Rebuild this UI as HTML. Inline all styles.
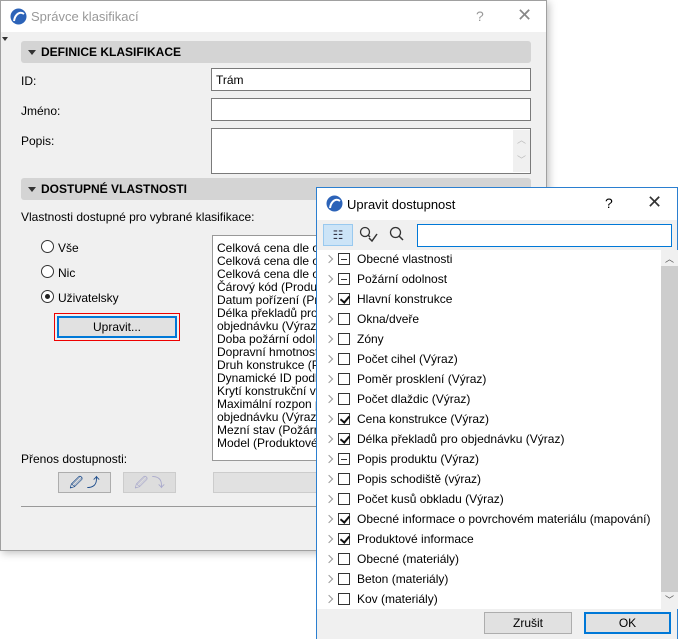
<!DOCTYPE html>
<html><head><meta charset="utf-8"><style>
*{box-sizing:border-box;margin:0;padding:0}
body{width:678px;height:639px;background:#fff;position:relative;overflow:hidden;font-family:"Liberation Sans",sans-serif;font-size:12px;color:#000}
.a{position:absolute}
.main{left:0;top:0;width:547px;height:551px;background:#f0f0f0;border:1px solid #a0a0a0;box-shadow:2px 2px 8px rgba(0,0,0,.25)}
.tb{left:0;top:0;width:545px;height:31px;background:#fff}
.hdr{background:#d4d4d4;border-radius:3px;height:22px;font-weight:bold;font-size:12px;padding:4px 0 0 20px}
.hdr:before{content:"";position:absolute;left:7px;top:9px;border-left:4px solid transparent;border-right:4px solid transparent;border-top:5px solid #333}
.inp{background:#fff;border:1px solid #7a7a7a}
.rad{width:13px;height:13px;border:1px solid #333;border-radius:50%;background:#fff}
.lst div{height:13px;line-height:13px;white-space:nowrap}
.btn{background:#e1e1e1;border:1px solid #adadad}
.dlg{left:316px;top:187px;width:362px;height:452px;background:#fff;border:1px solid #2b7fd0}
.row{position:absolute;left:0;height:20px;line-height:20px;white-space:nowrap}
.chev{position:absolute;left:9px;top:7px;width:6px;height:6px;border-right:1.5px solid #999;border-top:1.5px solid #999;transform:rotate(45deg)}
.cb{position:absolute;left:21px;top:4px;width:12px;height:12px;border:1px solid #333;background:#fff}
.cb.m:after{content:"";position:absolute;left:2px;top:4.5px;width:6px;height:1px;background:#333}
.cb.c:after{content:"";position:absolute;left:3px;top:0px;width:4px;height:7px;border-right:2px solid #111;border-bottom:2px solid #111;transform:rotate(40deg)}
.row span{position:absolute;left:40px}
</style></head><body>
<div class="a main">
 <div class="a tb"></div>
 <svg class="a" style="left:9px;top:7px" width="17" height="17" viewBox="0 0 17 17"><circle cx="8.5" cy="8.5" r="8" fill="#2c63b8"/><path d="M4 13 C5 6 10 3 14 6" stroke="#fff" stroke-width="2" fill="none"/></svg>
 <div class="a" style="left:30px;top:8px;color:#999;font-size:13px">Správce klasifikací</div>
 <div class="a" style="left:475px;top:7px;color:#999;font-size:14px">?</div>
 <div class="a" style="left:516px;top:4px;color:#888;font-size:18px">✕</div>
 <div class="a" style="left:1px;top:36px;border-left:3px solid transparent;border-right:3px solid transparent;border-top:4px solid #333"></div>
 <div class="a hdr" style="left:20px;top:40px;width:510px">DEFINICE KLASIFIKACE</div>
 <div class="a" style="left:20px;top:73px">ID:</div>
 <div class="a inp" style="left:210px;top:67px;width:320px;height:23px;padding:4px 4px">Trám</div>
 <div class="a" style="left:20px;top:103px">Jméno:</div>
 <div class="a inp" style="left:210px;top:97px;width:320px;height:23px"></div>
 <div class="a" style="left:20px;top:133px">Popis:</div>
 <div class="a inp" style="left:210px;top:127px;width:320px;height:46px"><div class="a" style="right:0;top:1px;width:17px;height:42px;background:#f0f0f0;color:#bbb;font-size:9px;text-align:center;line-height:20px">︿<br>﹀</div></div>
 <div class="a hdr" style="left:20px;top:177px;width:510px">DOSTUPNÉ VLASTNOSTI</div>
 <div class="a" style="left:20px;top:209px">Vlastnosti dostupné pro vybrané klasifikace:</div>
 <div class="a rad" style="left:40px;top:239px"></div><div class="a" style="left:57px;top:240px">Vše</div>
 <div class="a rad" style="left:40px;top:264px"></div><div class="a" style="left:57px;top:265px">Nic</div>
 <div class="a rad" style="left:40px;top:289px"><div class="a" style="left:3px;top:3px;width:5px;height:5px;border-radius:50%;background:#222"></div></div><div class="a" style="left:57px;top:290px">Uživatelsky</div>
 <div class="a" style="left:53px;top:312px;width:126px;height:28px;border:1px solid #e00"><div class="a btn" style="left:2px;top:2px;width:120px;height:22px;border:2px solid #0078d7;text-align:center;line-height:18px">Upravit...</div></div>
 <div class="a inp lst" style="left:211px;top:234px;width:120px;height:226px;padding:6px 0 0 4px;border-color:#999">
  <div>Celková cena dle objednávky</div><div>Celková cena dle objednávky</div><div>Celková cena dle objednávky</div><div>Čárový kód (Produktové</div><div>Datum pořízení (Produktové</div><div>Délka překladů pro</div><div>objednávku (Výraz)</div><div>Doba požární odolnosti</div><div>Dopravní hmotnost</div><div>Druh konstrukce (Po</div><div>Dynamické ID podle</div><div>Krytí konstrukční výztuže</div><div>Maximální rozpon pro</div><div>objednávku (Výraz))</div><div>Mezní stav (Požární</div><div>Model (Produktové</div>
 </div>
 <div class="a" style="left:20px;top:451px">Přenos dostupnosti:</div>
 <div class="a btn" style="left:57px;top:471px;width:53px;height:21px;color:#1a4a8a;font-size:13px;text-align:center;line-height:19px">🖉 ⤴</div>
 <div class="a btn" style="left:122px;top:471px;width:53px;height:21px;color:#aac;background:#ddd;border-color:#ccc;font-size:13px;text-align:center;line-height:19px">🖉 ⤵</div>
 <div class="a btn" style="left:212px;top:471px;width:110px;height:21px;border-color:#ccc"></div>
 <div class="a" style="left:20px;top:505px;width:300px;height:1px;background:#999"></div>
</div>

<div class="a dlg">
 <svg class="a" style="left:9px;top:7px" width="17" height="17" viewBox="0 0 17 17"><circle cx="8.5" cy="8.5" r="8" fill="#2c63b8"/><path d="M4 13 C5 6 10 3 14 6" stroke="#fff" stroke-width="2" fill="none"/></svg>
 <div class="a" style="left:30px;top:9px;font-size:13px">Upravit dostupnost</div>
 <div class="a" style="left:288px;top:7px;font-size:14px">?</div>
 <div class="a" style="left:330px;top:4px;font-size:18px;color:#333">✕</div>
 <div class="a" style="left:0;top:32px;width:360px;height:30px;background:#f0f0f0"></div>
 <div class="a" style="left:6px;top:36px;width:30px;height:22px;background:#cce4f7;border:1px solid #99c9ef;font-size:12px;text-align:center;line-height:20px;color:#334">☷</div>
 <svg class="a" style="left:42px;top:38px" width="20" height="18"><circle cx="6" cy="6" r="4.5" stroke="#333" fill="none" stroke-width="1.3"/><path d="M9 9 L11 11 M10 12 L13 15 L18 8" stroke="#333" stroke-width="1.5" fill="none"/></svg>
 <svg class="a" style="left:72px;top:38px" width="16" height="16"><circle cx="6.5" cy="6.5" r="5" stroke="#333" fill="none" stroke-width="1.3"/><path d="M10 10 L14 14" stroke="#333" stroke-width="1.5"/></svg>
 <div class="a" style="left:100px;top:36px;width:255px;height:23px;border:1px solid #0078d7;background:#fff"></div>
 <div class="a" style="left:0;top:61px;width:344px;height:360px;overflow:hidden">
  <div class="row" style="top:0"><i class="chev"></i><i class="cb m"></i><span>Obecné vlastnosti</span></div>
  <div class="row" style="top:20px"><i class="chev"></i><i class="cb m"></i><span>Požární odolnost</span></div>
  <div class="row" style="top:40px"><i class="chev"></i><i class="cb c"></i><span>Hlavní konstrukce</span></div>
  <div class="row" style="top:60px"><i class="chev"></i><i class="cb"></i><span>Okna/dveře</span></div>
  <div class="row" style="top:80px"><i class="chev"></i><i class="cb"></i><span>Zóny</span></div>
  <div class="row" style="top:100px"><i class="chev"></i><i class="cb"></i><span>Počet cihel (Výraz)</span></div>
  <div class="row" style="top:120px"><i class="chev"></i><i class="cb"></i><span>Poměr prosklení (Výraz)</span></div>
  <div class="row" style="top:140px"><i class="chev"></i><i class="cb"></i><span>Počet dlaždic (Výraz)</span></div>
  <div class="row" style="top:160px"><i class="chev"></i><i class="cb c"></i><span>Cena konstrukce (Výraz)</span></div>
  <div class="row" style="top:180px"><i class="chev"></i><i class="cb c"></i><span>Délka překladů pro objednávku (Výraz)</span></div>
  <div class="row" style="top:200px"><i class="chev"></i><i class="cb m"></i><span>Popis produktu (Výraz)</span></div>
  <div class="row" style="top:220px"><i class="chev"></i><i class="cb"></i><span>Popis schodiště (výraz)</span></div>
  <div class="row" style="top:240px"><i class="chev"></i><i class="cb"></i><span>Počet kusů obkladu (Výraz)</span></div>
  <div class="row" style="top:260px"><i class="chev"></i><i class="cb c"></i><span>Obecné informace o povrchovém materiálu (mapování)</span></div>
  <div class="row" style="top:280px"><i class="chev"></i><i class="cb c"></i><span>Produktové informace</span></div>
  <div class="row" style="top:300px"><i class="chev"></i><i class="cb"></i><span>Obecné (materiály)</span></div>
  <div class="row" style="top:320px"><i class="chev"></i><i class="cb"></i><span>Beton (materiály)</span></div>
  <div class="row" style="top:340px"><i class="chev"></i><i class="cb"></i><span>Kov (materiály)</span></div>
 </div>
 <div class="a" style="left:344px;top:62px;width:17px;height:359px;background:#f0f0f0"></div>
 <div class="a" style="left:344px;top:78px;width:17px;height:326px;background:#cdcdcd"></div>
 <div class="a" style="left:344px;top:64px;width:17px;text-align:center;font-size:9px;color:#555">︿</div>
 <div class="a" style="left:344px;top:405px;width:17px;text-align:center;font-size:9px;color:#555">﹀</div>
 <div class="a" style="left:0;top:421px;width:360px;height:30px;background:#f0f0f0"></div>
 <div class="a btn" style="left:167px;top:424px;width:88px;height:22px;text-align:center;line-height:20px">Zrušit</div>
 <div class="a btn" style="left:267px;top:424px;width:87px;height:22px;text-align:center;line-height:18px;border:2px solid #0078d7">OK</div>
</div>
</body></html>
